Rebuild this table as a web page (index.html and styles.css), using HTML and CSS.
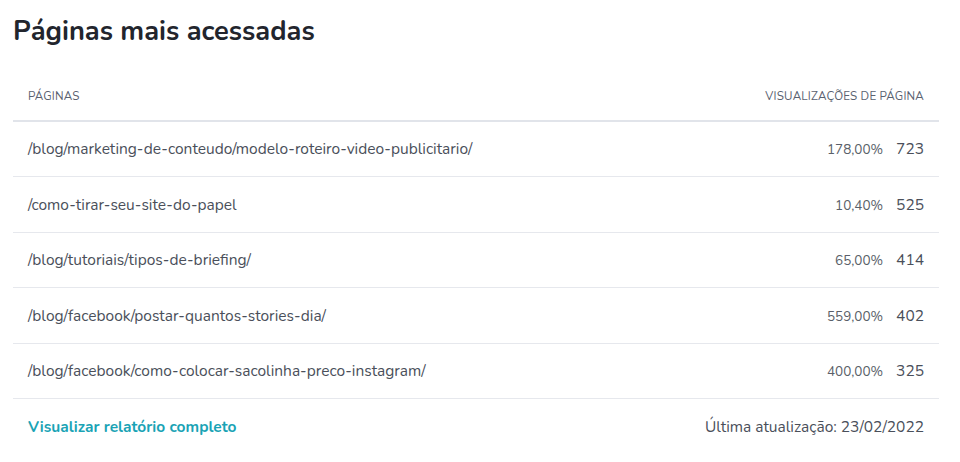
FILE: index.html
```html
<!DOCTYPE html>
<html lang="pt-BR">
<head>
<meta charset="utf-8">
<link rel="stylesheet" href="styles.css">
</head>
<body>
<section class="card">
  <h1 class="title">Páginas mais acessadas</h1>
  <div class="table">
    <div class="row head">
      <span class="col-page">Páginas</span>
      <span class="col-views">Visualizações de página</span>
    </div>
    <div class="row">
      <span class="col-page">/blog/marketing-de-conteudo/modelo-roteiro-video-publicitario/</span>
      <span class="col-views"><span class="pct">178,00%</span><span class="num">723</span></span>
    </div>
    <div class="row">
      <span class="col-page">/como-tirar-seu-site-do-papel</span>
      <span class="col-views"><span class="pct">10,40%</span><span class="num">525</span></span>
    </div>
    <div class="row">
      <span class="col-page">/blog/tutoriais/tipos-de-briefing/</span>
      <span class="col-views"><span class="pct">65,00%</span><span class="num">414</span></span>
    </div>
    <div class="row">
      <span class="col-page">/blog/facebook/postar-quantos-stories-dia/</span>
      <span class="col-views"><span class="pct">559,00%</span><span class="num">402</span></span>
    </div>
    <div class="row">
      <span class="col-page">/blog/facebook/como-colocar-sacolinha-preco-instagram/</span>
      <span class="col-views"><span class="pct">400,00%</span><span class="num">325</span></span>
    </div>
    <div class="row foot">
      <a class="link" href="#">Visualizar relatório completo</a>
      <span class="updated">Última atualização: 23/02/2022</span>
    </div>
  </div>
</section>
</body>
</html>
```
FILE: styles.css
```css
* { box-sizing: border-box; }
html, body { margin: 0; padding: 0; background: #ffffff; }
body {
  font-family: "Nunito", "Lato", "Open Sans", sans-serif;
  color: #4a4f5a;
}
.card {
  padding: 14px 21px 0 13px;
}
.title {
  margin: 0;
  font-size: 27.2px;
  line-height: 36px;
  font-weight: 700;
  color: #22252d;
}
.table {
  margin-top: 23px;
  display: flex;
  flex-direction: column;
}
.row {
  display: flex;
  justify-content: space-between;
  align-items: center;
  height: 55.5px;
  padding: 0 15px;
  border-bottom: 1px solid #e6e8ed;
  font-size: 15.5px;
}
.row.head {
  height: 48.5px;
  border-bottom: 2px solid #e1e4ea;
  font-size: 11.6px;
  letter-spacing: 0.2px;
  text-transform: uppercase;
  color: #5a6170;
}
.col-views {
  display: flex;
  align-items: baseline;
}
.pct {
  font-size: 13.5px;
  color: #5a5f69;
  margin-right: 13px;
}
.num {
  font-size: 15.5px;
  color: #4a4f5a;
}
.row.foot {
  border-bottom: none;
}
.link {
  color: #1aa3b5;
  font-weight: 700;
  text-decoration: none;
}
.updated {
  color: #4a4f5a;
}
```
